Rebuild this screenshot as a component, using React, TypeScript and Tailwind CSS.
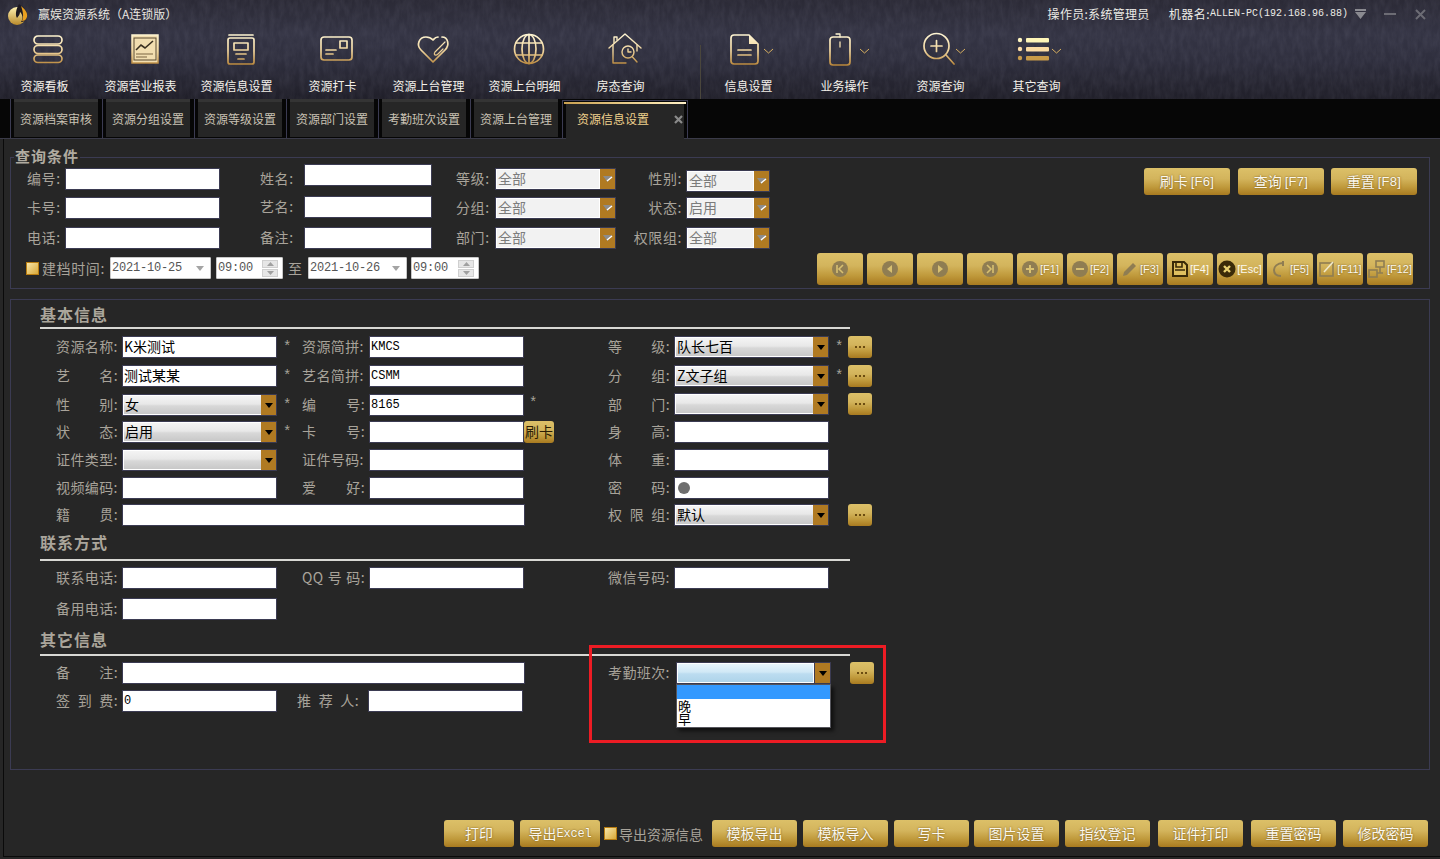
import React from "react";

const cjk = "font-['Noto_Sans_CJK_SC',sans-serif]";
const mono = "font-['Liberation_Mono','Noto_Sans_CJK_SC',monospace]";
const sans = "font-['Liberation_Sans','Noto_Sans_CJK_SC',sans-serif]";
const goldBg =
  "bg-[linear-gradient(180deg,#dcc068_0%,#d3b45c_40%,#c09a3c_70%,#a87a20_100%)] rounded-[3px]";

const G = "url(#gh)";

function HIcon({ name }: { name: string }) {
  const common = { fill: "none", stroke: G, strokeWidth: 1.7, strokeLinecap: "round" as const, strokeLinejoin: "round" as const };
  const chev = <polyline points="39,18 43.5,22 48,18" fill="none" stroke="#d8b060" strokeWidth="1" />;
  let c: React.ReactNode = null;
  if (name === "pills")
    c = (
      <g {...common}>
        <rect x="13" y="5" width="28" height="8" rx="4" />
        <rect x="13" y="14.5" width="28" height="8" rx="4" />
        <rect x="13" y="24" width="28" height="7.5" rx="3.8" />
      </g>
    );
  if (name === "report")
    c = (
      <g>
        <rect x="15" y="4" width="26" height="28" fill="#f2deb0" stroke={G} strokeWidth="1.5" />
        <rect x="17" y="7" width="22" height="22" fill="none" stroke="#5a4a30" strokeWidth="1" />
        <polyline points="19,19 24,14 28,17 36,10" fill="none" stroke="#3a3020" strokeWidth="1.6" />
        <path d="M19 23H36M19 26H30" stroke="#7a6440" strokeWidth="1.2" />
      </g>
    );
  if (name === "doc")
    c = (
      <g {...common}>
        <path d="M16 4H40" />
        <rect x="15" y="7" width="26" height="26" rx="2" />
        <rect x="21" y="12" width="14" height="7" />
        <path d="M23 23H33M25 28H31" />
      </g>
    );
  if (name === "card")
    c = (
      <g {...common}>
        <rect x="12" y="6" width="31" height="23" rx="3" />
        <rect x="31" y="10" width="7" height="7" />
        <path d="M17 19H27M17 23H24" />
      </g>
    );
  if (name === "heart")
    c = (
      <g {...common}>
        <path d="M33 6C30 6 29 8 28 9C26 7 24 6 21 6C14 6 11 14 16 19L28 31L40 19C45 14 43 6 37 6" />
        <path d="M40 11L30 21C28 24 31 25 33 23L38 18" strokeWidth="1.2" />
      </g>
    );
  if (name === "globe")
    c = (
      <g {...common}>
        <circle cx="28" cy="18" r="14.5" />
        <ellipse cx="28" cy="18" rx="7" ry="14.5" />
        <path d="M28 3.5V32.5M15 12H41M15 24H41" />
      </g>
    );
  if (name === "house")
    c = (
      <g {...common} strokeWidth="1.4">
        <path d="M12 17L28 3L44 17" />
        <path d="M17 12V6H20V9" />
        <path d="M16 14V32H29M40 14V20" />
        <circle cx="31" cy="21" r="6" />
        <path d="M31 18V21H34M35.5 26L40 31" />
      </g>
    );
  if (name === "doc2")
    c = (
      <g>
        <g {...common}>
          <path d="M9 4H24L33 13V30C33 32 32 33 30 33H9C7 33 6 32 6 30V7C6 5 7 4 9 4Z" />
          <path d="M13 19H26M13 24H26" />
        </g>
        <path d="M24 4V13H33Z" fill={G} />
        {chev}
      </g>
    );
  if (name === "phone")
    c = (
      <g>
        <g {...common}>
          <rect x="9" y="6" width="20" height="28" rx="3" />
          <path d="M15 3H19V6M19 11V16" strokeWidth="1.3" />
        </g>
        {chev}
      </g>
    );
  if (name === "zoom")
    c = (
      <g>
        <g {...common}>
          <circle cx="19.5" cy="15" r="12.5" />
          <path d="M14 15H25M19.5 9.5V20.5M29 24L37 33" />
        </g>
        {chev}
      </g>
    );
  if (name === "list")
    c = (
      <g>
        <circle cx="7" cy="9" r="2.2" fill="#fff6c0" />
        <circle cx="7" cy="18" r="2.2" fill="#ffdfa8" />
        <circle cx="7" cy="27" r="2.2" fill="#c99c4c" />
        <rect x="13" y="7" width="23" height="4.5" rx="1" fill="#fff6b8" />
        <rect x="13" y="16" width="23" height="4.5" rx="1" fill="#fcdca4" />
        <rect x="13" y="25" width="23" height="4.5" rx="1" fill="#c89a48" />
        {chev}
      </g>
    );
  return (
    <svg width="48" height="36" viewBox="0 0 48 36" className="block">
      {c}
    </svg>
  );
}

const topItems1 = [
  ["pills", "资源看板"],
  ["report", "资源营业报表"],
  ["doc", "资源信息设置"],
  ["card", "资源打卡"],
  ["heart", "资源上台管理"],
  ["globe", "资源上台明细"],
  ["house", "房态查询"],
];
const topItems2 = [
  ["doc2", "信息设置"],
  ["phone", "业务操作"],
  ["zoom", "资源查询"],
  ["list", "其它查询"],
];

function TopItem({ icon, text }: { icon: string; text: string }) {
  return (
    <div className="w-[96px] flex flex-col items-center pt-[3px]">
      <HIcon name={icon} />
      <div className="mt-[11px] pr-[1px] h-[16px] leading-[16px] text-[12px] text-[#f4f1ea] whitespace-nowrap">{text}</div>
    </div>
  );
}

function Header() {
  return (
    <div className="relative h-[99px] shrink-0 overflow-hidden bg-[linear-gradient(180deg,#2b2a36_0%,#343444_35%,#2f2f3e_60%,#201f29_100%)]">
      <svg className="absolute inset-0 w-full h-full opacity-[0.1]" aria-hidden="true">
        <filter id="leather">
          <feTurbulence type="fractalNoise" baseFrequency="0.2 0.08" numOctaves="3" seed="4" />
          <feColorMatrix values="0 0 0 0 0.55  0 0 0 0 0.55  0 0 0 0 0.7  0 0 0 1.2 -0.35" />
        </filter>
        <rect width="100%" height="100%" filter="url(#leather)" />
      </svg>
      <div className="relative flex h-[28px] items-center pl-[7px] pr-[14px]">
        <svg width="23" height="24" viewBox="0 0 23 24" className="shrink-0">
          <defs>
            <linearGradient id="lg" x1="0" y1="0" x2="0" y2="1">
              <stop offset="0" stopColor="#fff2b0" />
              <stop offset="1" stopColor="#b98a2a" />
            </linearGradient>
          </defs>
          <circle cx="10" cy="14" r="9" fill="url(#lg)" />
          <path d="M12 2C16 5 21 9 20 15C19 19 16 20 14 20C17 16 15 12 13 10C13 13 11 14 10 16C8 13 9 7 12 2Z" fill="#1e1a20" />
          <path d="M14 4C18 7 21 11 20 15C19 18 17 19 15 19C17 15 16 9 14 4Z" fill="#e8a020" />
        </svg>
        <div className="ml-[8px] text-[12px] leading-[16px] text-[#e8e6e0] whitespace-nowrap">赢娱资源系统（A连锁版）</div>
        <div className="ml-auto flex items-center text-[12px] leading-[16px] text-[#ecebe6]">
          <span className="tracking-[0.3px]">操作员:系统管理员</span>
          <span className="ml-[19px] tracking-[0.5px]">机器名:</span>
          <span className={`${mono} text-[10px] whitespace-nowrap`}>ALLEN-PC(192.168.96.88)</span>
          <svg width="11" height="10" viewBox="0 0 11 10" className="ml-[7px]">
            <path d="M0 0H11V2H0ZM0 3H11L5.5 10Z" fill="#8a8a90" />
          </svg>
          <svg width="12" height="2" viewBox="0 0 12 2" className="ml-[18px]">
            <rect width="12" height="2" fill="#6c6c74" />
          </svg>
          <svg width="11" height="11" viewBox="0 0 11 11" className="ml-[19px]">
            <path d="M1 1L10 10M10 1L1 10" stroke="#6c6c74" strokeWidth="2" />
          </svg>
        </div>
      </div>
      <div className="relative flex -ml-[3px]">
        {topItems1.map(([i, t]) => (
          <TopItem key={t} icon={i} text={t} />
        ))}
        <div className="w-[32px] flex justify-end">
          <div className="mt-[17px] w-px h-[54px] bg-[#4a463c]" />
        </div>
        {topItems2.map(([i, t]) => (
          <TopItem key={t} icon={i} text={t} />
        ))}
      </div>
    </div>
  );
}

const tabs = ["资源档案审核", "资源分组设置", "资源等级设置", "资源部门设置", "考勤班次设置", "资源上台管理"];

function Tabs() {
  return (
    <div className="h-[40px] shrink-0 bg-[#060606] border-b border-[#3a3a48] flex pl-[10px]">
      {tabs.map((t) => (
        <div key={t} className="w-[92px] border-l border-[#3b3b52] pl-[3px] pr-[3px]">
          <div className="h-[38px] w-[84px] bg-[#262626] border-t-[3px] border-[#343434] text-[12px] leading-[34px] text-center text-[#c9c2b4] whitespace-nowrap">
            {t}
          </div>
        </div>
      ))}
      <div className="w-[126px] mt-[1px] border-x border-t border-[#3b3b52] px-[1px]">
        <div className="h-[2px] mt-[1px] bg-[linear-gradient(90deg,#c9a050,#f4dca0_70%,#fff0c8)]" />
        <div className="mx-[2px] h-[36px] bg-[#262626] flex items-center pl-[11px] pr-[1px] pb-[6px]">
          <span className="text-[12px] text-[#eed08c] whitespace-nowrap">资源信息设置</span>
          <svg width="9" height="9" viewBox="0 0 9 9" className="ml-auto">
            <path d="M1 1L8 8M8 1L1 8" stroke="#8a8a8a" strokeWidth="2.2" />
          </svg>
        </div>
      </div>
    </div>
  );
}

function QLabel({ t, className = "" }: { t: string; className?: string }) {
  return <div className={`text-[14px] leading-[21px] tracking-[0.6px] text-[#a8a39a] whitespace-nowrap shrink-0 ${className}`}>{t}</div>;
}

function QInput({ className = "" }: { className?: string }) {
  return <input readOnly className={`h-[22px] bg-white border border-[#3b3b52] outline-none ${className}`} />;
}

function QSelect({ value, className = "" }: { value: string; className?: string }) {
  return (
    <div className={`h-[22px] flex border border-[#3b3b52] ${className}`}>
      <div className="flex-1 bg-[#f2f2f2] border border-white text-[14px] leading-[17px] pl-[1px] text-[#7c7c7c]">{value}</div>
      <div className="w-[15px] bg-[#b07a22] flex items-center justify-center">
        <svg width="10" height="8" viewBox="0 0 10 8">
          <path d="M0 1H9L4.5 7Z" fill="#8c8c8c" />
          <path d="M4 6L9 2" stroke="#fff" strokeWidth="1.4" />
        </svg>
      </div>
    </div>
  );
}

function Spin() {
  return (
    <div className="w-[16px] h-[17px] flex flex-col gap-px shrink-0">
      {[0, 1].map((i) => (
        <div key={i} className="flex-1 bg-[#e6e6e6] border border-[#cfcfcf] flex items-center justify-center">
          <svg width="7" height="4" viewBox="0 0 7 4">
            <path d={i === 0 ? "M3.5 0L7 4H0Z" : "M0 0H7L3.5 4Z"} fill="#a0a0a0" />
          </svg>
        </div>
      ))}
    </div>
  );
}

function DateBox({ v, className = "" }: { v: string; className?: string }) {
  return (
    <div className={`h-[22px] bg-white border border-[#c8c8c8] rounded-[1px] flex items-center pl-[1px] pr-[6px] ${className}`}>
      <span className={`${mono} text-[12px] tracking-[-0.2px] text-[#555]`}>{v}</span>
      <svg width="8" height="5" viewBox="0 0 8 5" className="ml-auto">
        <path d="M0 0H8L4 5Z" fill="#a4a4a4" />
      </svg>
    </div>
  );
}

function TimeBox({ className = "" }: { className?: string }) {
  return (
    <div className={`h-[22px] bg-white border border-[#c8c8c8] rounded-[1px] flex items-center pl-[1px] pr-[4px] ${className}`}>
      <span className={`${mono} text-[12px] tracking-[-0.2px] text-[#555]`}>09:00</span>
      <div className="ml-auto">
        <Spin />
      </div>
    </div>
  );
}

function Check({ className = "" }: { className?: string }) {
  return (
    <div className={`w-[13px] h-[13px] shrink-0 border border-[#b87c10] bg-[linear-gradient(135deg,#f8e6a8,#d8a838)] ${className}`} />
  );
}

function GoldBtn({ t, className = "" }: { t: React.ReactNode; className?: string }) {
  return (
    <div
      className={`${goldBg} flex items-center justify-center text-[14px] text-[#fbf8ee] whitespace-nowrap [text-shadow:0_0_2px_#6b4c10] ${className}`}
    >
      {t}
    </div>
  );
}

function Fk({ t }: { t: string }) {
  return <span className={`${sans} text-[13px] tracking-[0.3px] ml-[3px]`}>{t}</span>;
}

function SmallIcon({ n }: { n: string }) {
  const g = "#8f7d52";
  const y = "#d8c070";
  const wrap = (c: React.ReactNode) => (
    <svg width="18" height="18" viewBox="0 0 18 18" className="shrink-0">
      {c}
    </svg>
  );
  if (n === "first")
    return wrap(<g><circle cx="9" cy="9" r="8" fill={g} /><path d="M6 5V13M12 5L8 9L12 13" fill="none" stroke={y} strokeWidth="1.6" /></g>);
  if (n === "prev") return wrap(<g><circle cx="9" cy="9" r="8" fill={g} /><path d="M11 5V13L6 9Z" fill={y} /></g>);
  if (n === "next") return wrap(<g><circle cx="9" cy="9" r="8" fill={g} /><path d="M7 5V13L12 9Z" fill={y} /></g>);
  if (n === "last")
    return wrap(<g><circle cx="9" cy="9" r="8" fill={g} /><path d="M12 5V13M6 5L10 9L6 13" fill="none" stroke={y} strokeWidth="1.6" /></g>);
  if (n === "plus") return wrap(<g><circle cx="9" cy="9" r="8" fill={g} /><path d="M5 9H13M9 5V13" stroke={y} strokeWidth="2" /></g>);
  if (n === "minus") return wrap(<g><circle cx="9" cy="9" r="8" fill={g} /><path d="M5 9H13" stroke={y} strokeWidth="2" /></g>);
  if (n === "pen") return wrap(<path d="M2 16L3 12L12 3L15 6L6 15Z" fill={g} />);
  if (n === "save")
    return wrap(<g><path d="M2 2H13L16 5V16H2Z" fill="#e0c060" stroke="#3a2a08" strokeWidth="2" /><path d="M5 2H11V7H5ZM4 10H14" fill="none" stroke="#3a2a08" strokeWidth="1.6" /></g>);
  if (n === "esc")
    return wrap(<g><circle cx="9" cy="9" r="8.5" fill="#3a2a08" /><path d="M6 6L12 12M12 6L6 12" stroke="#e8d070" strokeWidth="2.4" /></g>);
  if (n === "redo") return wrap(<path d="M12 3C6 3 3 7 3 10C3 14 6 16 10 16M12 1V6" fill="none" stroke={g} strokeWidth="2" />);
  if (n === "edit")
    return wrap(<g><rect x="2" y="3" width="13" height="13" fill="none" stroke={g} strokeWidth="1.6" /><path d="M6 12L15 2" stroke="#f0e8c8" strokeWidth="1.6" /></g>);
  return wrap(
    <g fill="none" stroke={g} strokeWidth="1.6">
      <rect x="8" y="1" width="8" height="6" />
      <rect x="1" y="10" width="8" height="7" />
      <path d="M9 13H15M12 7V13" />
    </g>,
  );
}

const navBtns: [string, string][] = [
  ["first", ""],
  ["prev", ""],
  ["next", ""],
  ["last", ""],
  ["plus", "[F1]"],
  ["minus", "[F2]"],
  ["pen", "[F3]"],
  ["save", "[F4]"],
  ["esc", "[Esc]"],
  ["redo", "[F5]"],
  ["edit", "[F11]"],
  ["tree", "[F12]"],
];

function QueryPanel() {
  return (
    <fieldset className="mt-[9px] h-[141px] border border-[#3b3b52] min-w-0 shrink-0">
      <legend className="ml-[3px] px-[1px] h-[18px] text-[15px] leading-[16px] font-bold tracking-[1px] text-[#b0aba0]">查询条件</legend>
      <div className="flex">
        <div className="w-[760px] shrink-0">
          <div className="flex">
            <div className="ml-[16px] flex flex-col">
              <div className="mt-[2px] h-[22px] flex"><QLabel t="编号:" className="w-[38px]" /><QInput className="w-[155px]" /></div>
              <div className="mt-[7px] h-[22px] flex"><QLabel t="卡号:" className="w-[38px]" /><QInput className="w-[155px]" /></div>
              <div className="mt-[8px] h-[22px] flex"><QLabel t="电话:" className="w-[38px]" /><QInput className="w-[155px]" /></div>
            </div>
            <div className="ml-[40px] flex flex-col">
              <div className="-mt-[2px] h-[22px] flex"><QLabel t="姓名:" className="w-[44px] mt-[4px]" /><QInput className="w-[128px]" /></div>
              <div className="mt-[10px] h-[22px] flex"><QLabel t="艺名:" className="w-[44px]" /><QInput className="w-[128px]" /></div>
              <div className="mt-[9px] h-[22px] flex"><QLabel t="备注:" className="w-[44px]" /><QInput className="w-[128px]" /></div>
            </div>
            <div className="ml-[24px] flex flex-col">
              <div className="mt-[2px] h-[22px] flex"><QLabel t="等级:" className="w-[39px]" /><QSelect value="全部" className="w-[121px]" /></div>
              <div className="mt-[7px] h-[22px] flex"><QLabel t="分组:" className="w-[39px]" /><QSelect value="全部" className="w-[121px]" /></div>
              <div className="mt-[8px] h-[22px] flex"><QLabel t="部门:" className="w-[39px]" /><QSelect value="全部" className="w-[121px]" /></div>
            </div>
            <div className="ml-[17px] flex flex-col">
              <div className="mt-[4px] h-[22px] flex"><QLabel t="性别:" className="w-[53px] pr-[4px] text-right -mt-[2px]" /><QSelect value="全部" className="w-[84px]" /></div>
              <div className="mt-[5px] h-[22px] flex"><QLabel t="状态:" className="w-[53px] pr-[4px] text-right" /><QSelect value="启用" className="w-[84px]" /></div>
              <div className="mt-[8px] h-[22px] flex"><QLabel t="权限组:" className="w-[53px] pr-[4px] text-right" /><QSelect value="全部" className="w-[84px]" /></div>
            </div>
          </div>
          <div className="mt-[8px] flex items-center pl-[15px]">
            <Check />
            <QLabel t="建档时间:" className="ml-[3px] w-[68px]" />
            <DateBox v="2021-10-25" className="w-[101px]" />
            <TimeBox className="w-[67px] ml-[5px]" />
            <QLabel t="至" className="ml-[5px] w-[20px]" />
            <DateBox v="2021-10-26" className="w-[99px]" />
            <TimeBox className="w-[68px] ml-[4px]" />
          </div>
        </div>
        <div className="flex-1 flex flex-col">
          <div className="mt-[2px] flex justify-end pr-[12px]">
            <GoldBtn className="w-[86px] h-[27px]" t={<><span>刷卡</span><Fk t="[F6]" /></>} />
            <GoldBtn className="w-[86px] h-[27px] ml-[8px]" t={<><span>查询</span><Fk t="[F7]" /></>} />
            <GoldBtn className="w-[86px] h-[27px] ml-[7px]" t={<><span>重置</span><Fk t="[F8]" /></>} />
          </div>
          <div className="mt-[58px] flex justify-end gap-[4px] pr-[16px]">
            {navBtns.map(([n, t]) => (
              <GoldBtn
                key={n}
                className={`w-[46px] h-[32px] ${n === "save" || n === "esc" ? "text-[#4a3208] [text-shadow:none]" : ""}`}
                t={
                  <>
                    <SmallIcon n={n} />
                    {t ? <span className={`${sans} text-[11px] ml-[1px]`}>{t}</span> : null}
                  </>
                }
              />
            ))}
          </div>
        </div>
      </div>
    </fieldset>
  );
}

function L({ parts, className = "" }: { parts: string[]; className?: string }) {
  return (
    <div className={`flex justify-between text-[14px] leading-[20px] tracking-[0.4px] text-[#a8a39a] whitespace-nowrap shrink-0 ${className}`}>
      {parts.map((p, i) => (
        <span key={i}>{p}</span>
      ))}
    </div>
  );
}

function In({ v = "", latin = false, className = "" }: { v?: string; latin?: boolean; className?: string }) {
  return (
    <input
      readOnly
      spellCheck={false}
      defaultValue={v}
      className={`h-[22px] bg-white border border-[#3b3b52] outline-none pl-[1px] text-black shrink-0 ${
        latin ? `${mono} text-[12px]` : "text-[14px] pb-[2px]"
      } ${className}`}
    />
  );
}

function Sel({ v = "", className = "" }: { v?: string; className?: string }) {
  return (
    <div className={`h-[22px] w-[155px] shrink-0 flex border border-[#3b3b52] ${className}`}>
      <div className="flex-1 border-y border-l border-white bg-[linear-gradient(180deg,#f4f4f4_0%,#e8e8e8_45%,#d8d8d8_55%,#c8c8c8_100%)] text-[14px] leading-[17px] pl-[1px] text-black overflow-hidden">
        {v}
      </div>
      <Arrow />
    </div>
  );
}

function Arrow() {
  return (
    <div className="w-[15px] bg-[#b07a22] flex items-center justify-center shrink-0">
      <svg width="8" height="5" viewBox="0 0 8 5">
        <path d="M0 0H8L4 5Z" fill="#000" />
      </svg>
    </div>
  );
}

function Dots({ className = "" }: { className?: string }) {
  return (
    <div className={`${goldBg} w-[24px] h-[22px] shrink-0 flex items-center justify-center gap-[2px] ${className}`}>
      <i className="block w-[2px] h-[2px] bg-[#6b4c10]" />
      <i className="block w-[2px] h-[2px] bg-[#6b4c10]" />
      <i className="block w-[2px] h-[2px] bg-[#6b4c10]" />
    </div>
  );
}

function Star({ className = "" }: { className?: string }) {
  return <span className={`${mono} text-[14px] leading-[22px] text-[#a8a39a] ${className}`}>*</span>;
}

function Section({ t, className = "", lineClass = "" }: { t: string; className?: string; lineClass?: string }) {
  return (
    <div className={className}>
      <div className="ml-[29px] h-[22px] text-[16px] leading-[20px] font-bold tracking-[1px] text-[#aaa59b]">{t}</div>
      <div className={`ml-[29px] w-[810px] h-[2px] bg-[#d8d8d4] ${lineClass}`} />
    </div>
  );
}

const rowCls = "flex items-start h-[22px] pl-[45px]";
const lab = "w-[62px] mr-[4px]";
const star1 = "w-[25px] shrink-0 flex";
const slot = "w-[84px] shrink-0 flex";

function MainPanel() {
  return (
    <div className="relative mt-[10px] h-[471px] shrink-0 border border-[#3b3b52] pt-[4px]">
      <Section t="基本信息" lineClass="mt-[1px]" />
      <div className={`${rowCls} mt-[7px]`}>
        <L parts={["资源名称:"]} className={lab} />
        <In v="K米测试" className="w-[155px]" />
        <div className={star1}><Star className="ml-[6px]" /></div>
        <L parts={["资源简拼:"]} className="w-[63px] mr-[4px]" />
        <In v="KMCS" latin className="w-[155px]" />
        <div className={slot} />
        <L parts={["等", "级:"]} className={lab} />
        <Sel v="队长七百" />
        <Star className="ml-[6px] w-[13px]" />
        <Dots />
      </div>
      <div className={`${rowCls} mt-[7px]`}>
        <L parts={["艺", "名:"]} className={lab} />
        <In v="测试某某" className="w-[155px]" />
        <div className={star1}><Star className="ml-[6px]" /></div>
        <L parts={["艺名简拼:"]} className="w-[63px] mr-[4px]" />
        <In v="CSMM" latin className="w-[155px]" />
        <div className={slot} />
        <L parts={["分", "组:"]} className={lab} />
        <Sel v="Z文子组" />
        <Star className="ml-[6px] w-[13px]" />
        <Dots />
      </div>
      <div className={`${rowCls} mt-[7px]`}>
        <L parts={["性", "别:"]} className={lab} />
        <Sel v="女" />
        <div className={star1}><Star className="ml-[6px]" /></div>
        <L parts={["编", "号:"]} className="w-[63px] mr-[4px]" />
        <In v="8165" latin className="w-[155px]" />
        <div className={slot}><Star className="ml-[5px] -mt-[2px]" /></div>
        <L parts={["部", "门:"]} className={lab} />
        <Sel className="-mt-px" />
        <div className="w-[19px] shrink-0" />
        <Dots className="-mt-px" />
      </div>
      <div className={`${rowCls} mt-[5px]`}>
        <L parts={["状", "态:"]} className={lab} />
        <Sel v="启用" />
        <div className={star1}><Star className="ml-[6px]" /></div>
        <L parts={["卡", "号:"]} className="w-[63px] mr-[4px]" />
        <In className="w-[155px]" />
        <div className={slot}>
          <div className={`${goldBg} w-[30px] h-[22px] text-[14px] leading-[21px] text-[#2a1c04] text-center whitespace-nowrap`}>刷卡</div>
        </div>
        <L parts={["身", "高:"]} className={lab} />
        <In className="w-[155px]" />
      </div>
      <div className={`${rowCls} mt-[6px]`}>
        <L parts={["证件类型:"]} className={lab} />
        <Sel />
        <div className={star1} />
        <L parts={["证件号码:"]} className="w-[63px] mr-[4px]" />
        <In className="w-[155px]" />
        <div className={slot} />
        <L parts={["体", "重:"]} className={lab} />
        <In className="w-[155px]" />
      </div>
      <div className={`${rowCls} mt-[6px]`}>
        <L parts={["视频编码:"]} className={lab} />
        <In className="w-[155px]" />
        <div className={star1} />
        <L parts={["爱", "好:"]} className="w-[63px] mr-[4px]" />
        <In className="w-[155px]" />
        <div className={slot} />
        <L parts={["密", "码:"]} className={lab} />
        <div className="w-[155px] h-[22px] shrink-0 bg-white border border-[#3b3b52] flex items-center pl-[3px]">
          <i className="block w-[12px] h-[12px] rounded-full bg-[#6e6e6e]" />
        </div>
      </div>
      <div className={`${rowCls} mt-[5px]`}>
        <L parts={["籍", "贯:"]} className={lab} />
        <In className="w-[403px]" />
        <div className="w-[83px] shrink-0" />
        <L parts={["权", "限", "组:"]} className={lab} />
        <Sel v="默认" />
        <div className="w-[19px] shrink-0" />
        <Dots />
      </div>

      <Section t="联系方式" className="mt-[6px]" lineClass="mt-[5px]" />
      <div className={`${rowCls} mt-[6px]`}>
        <L parts={["联系电话:"]} className={lab} />
        <In className="w-[155px]" />
        <div className={star1} />
        <L parts={["QQ", "号", "码:"]} className="w-[63px] mr-[4px]" />
        <In className="w-[155px]" />
        <div className={slot} />
        <L parts={["微信号码:"]} className={lab} />
        <In className="w-[155px]" />
      </div>
      <div className={`${rowCls} mt-[9px]`}>
        <L parts={["备用电话:"]} className={lab} />
        <In className="w-[155px]" />
      </div>

      <Section t="其它信息" className="mt-[9px]" lineClass="mt-[3px]" />
      <div className={`${rowCls} mt-[6px]`}>
        <L parts={["备", "注:"]} className={lab} />
        <In className="w-[403px]" />
        <div className="w-[83px] shrink-0" />
        <L parts={["考勤班次:"]} className="w-[62px] mr-[6px]" />
        <div className="relative w-[155px] h-[22px] shrink-0 flex border border-[#3b3b52]">
          <div className="flex-1 border border-white bg-[linear-gradient(180deg,#e8f5fb_0%,#d0e8f6_45%,#bcdcf0_55%,#aed4ea_100%)]" />
          <div className="w-px bg-[#3b3b52]" />
          <Arrow />
          <div className="absolute -left-px top-[21px] w-[155px] h-[44px] bg-white border border-[#55555c] shadow-[3px_3px_4px_rgba(0,0,0,0.6)] text-[13px] leading-[13px] text-black z-10">
            <div className="h-[14px] bg-[#3399ff]" />
            <div className="pl-[1px]">晚</div>
            <div className="pl-[1px]">早</div>
          </div>
        </div>
        <Dots className="ml-[19px]" />
      </div>
      <div className={`${rowCls} mt-[6px]`}>
        <L parts={["签", "到", "费:"]} className={lab} />
        <In v="0" latin className="w-[155px]" />
        <div className="w-[20px] shrink-0" />
        <L parts={["推", "荐", "人:"]} className="w-[62px] mr-[9px]" />
        <In className="w-[155px]" />
      </div>

      <div className="absolute left-[578px] top-[345px] w-[297px] h-[98px] border-[3px] border-[#ed1c24] pointer-events-none z-20" />
    </div>
  );
}

function BottomBar() {
  const h = "h-[27px] shrink-0";
  return (
    <div className="mt-auto mb-[9px] flex justify-end items-center pr-[2px]">
      <GoldBtn t="打印" className={`${h} w-[70px]`} />
      <GoldBtn
        t={<><span>导出</span><span className={`${mono} text-[12px] tracking-[-0.2px]`}>Excel</span></>}
        className={`${h} w-[80px] ml-[6px]`}
      />
      <Check className="ml-[4px]" />
      <div className="ml-[2px] w-[84px] text-[14px] leading-[22px] text-[#a8a39a] whitespace-nowrap">导出资源信息</div>
      <GoldBtn t="模板导出" className={`${h} w-[85px] ml-[9px]`} />
      <GoldBtn t="模板导入" className={`${h} w-[85px] ml-[6px]`} />
      <GoldBtn t="写卡" className={`${h} w-[75px] ml-[6px]`} />
      <GoldBtn t="图片设置" className={`${h} w-[85px] ml-[5px]`} />
      <GoldBtn t="指纹登记" className={`${h} w-[85px] ml-[6px]`} />
      <GoldBtn t="证件打印" className={`${h} w-[85px] ml-[8px]`} />
      <GoldBtn t="重置密码" className={`${h} w-[85px] ml-[8px]`} />
      <GoldBtn t="修改密码" className={`${h} w-[85px] ml-[7px]`} />
    </div>
  );
}

export default function App() {
  return (
    <div className={`${cjk} w-[1440px] h-[859px] overflow-hidden bg-[#262626] flex flex-col`}>
      <svg className="absolute w-0 h-0" aria-hidden="true">
        <defs>
          <linearGradient id="gh" gradientUnits="userSpaceOnUse" x1="0" y1="3" x2="0" y2="34">
            <stop offset="0" stopColor="#fff6d4" />
            <stop offset="0.55" stopColor="#f0d49c" />
            <stop offset="1" stopColor="#b8863a" />
          </linearGradient>
        </defs>
      </svg>
      <Header />
      <Tabs />
      <div className="ml-[3px] h-[718px] shrink-0 border-l border-b border-[#0a0a0a] pl-[6px] pr-[10px] flex flex-col">
        <QueryPanel />
        <MainPanel />
        <BottomBar />
      </div>
    </div>
  );
}
